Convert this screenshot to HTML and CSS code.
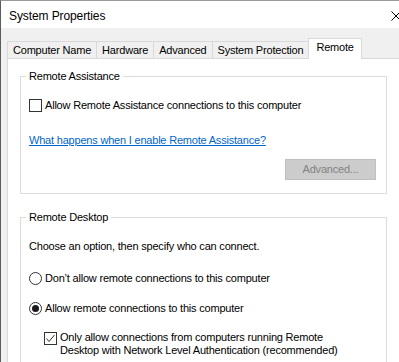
FILE: index.html
```html
<!DOCTYPE html>
<html lang="en">
<head>
    <meta charset="UTF-8">
    <meta name="viewport" content="width=device-width, initial-scale=1.0">
    <title>System Properties</title>
    <link rel="stylesheet" href="styles.css">
</head>
<body>
    <div class="window">
        <div class="titlebar">
            <span class="title">System Properties</span>
            <!-- close button is cut off by the window edge -->
            <span class="close">
                <svg width="8" height="10" viewBox="0 0 8 10">
                    <path d="M0.5 0.5 L9.5 9.5 M9.5 0.5 L0.5 9.5" stroke="#000" stroke-width="1" fill="none"/>
                </svg>
            </span>
        </div>

        <div class="dialog">
            <div class="tabs">
                <div class="tab">Computer Name</div>
                <div class="tab">Hardware</div>
                <div class="tab">Advanced</div>
                <div class="tab">System Protection</div>
                <div class="tab active">Remote</div>
            </div>

            <div class="panel">
                <!-- Remote Assistance -->
                <fieldset class="group">
                    <legend>Remote Assistance</legend>
                    <label class="option">
                        <span class="check"></span>
                        <span>Allow Remote Assistance connections to this computer</span>
                    </label>
                    <a class="help-link" href="#">What happens when I enable Remote Assistance?</a>
                    <div class="button-row">
                        <button class="btn" disabled>Advanced...</button>
                    </div>
                </fieldset>

                <!-- Remote Desktop -->
                <fieldset class="group desktop">
                    <legend>Remote Desktop</legend>
                    <p class="hint">Choose an option, then specify who can connect.</p>
                    <label class="option radio-row">
                        <span class="radio"></span>
                        <span>Don’t allow remote connections to this computer</span>
                    </label>
                    <label class="option radio-row second">
                        <span class="radio checked"></span>
                        <span>Allow remote connections to this computer</span>
                    </label>
                    <label class="option sub">
                        <span class="check checked">
                            <svg width="11" height="11" viewBox="0 0 11 11">
                                <polyline points="1.5,5.5 4,8.5 9.5,2" stroke="#333" stroke-width="1" fill="none"/>
                            </svg>
                        </span>
                        <span>Only allow connections from computers running Remote<br>Desktop with Network Level Authentication (recommended)</span>
                    </label>
                </fieldset>
            </div>
        </div>
    </div>
</body>
</html>
```

FILE: styles.css
```css
html, body {
    margin: 0;
    padding: 0;
}
body {
    background-color: #f0f0f0;
    font-family: "Liberation Sans", Arial, sans-serif;
    font-size: 11px;
    letter-spacing: -0.2px;
    line-height: 13px;
    color: #000;
    overflow: hidden;
}
.window {
    width: 399px;
    height: 362px;
    box-sizing: border-box;
    border-left: 1px solid #5c5c5c;
    border-top: 1px solid #9a9a9a;
    overflow: hidden;
}

/* Title bar */
.titlebar {
    height: 27px;
    box-sizing: border-box;
    padding-top: 3px;
    padding-left: 8px;
    background: white;
    display: flex;
    align-items: center;
    justify-content: space-between;
}
.title {
    font-size: 12px;
    letter-spacing: -0.1px;
}
.close svg {
    display: block;
}

/* Tabs */
.dialog {
    padding: 10px 0 0 6px;
}
.tabs {
    display: flex;
    align-items: flex-end;
}
.tab {
    height: 16px;
    line-height: 16px;
    padding: 0 5px;
    border: 1px solid #d9d9d9;
    border-bottom: none;
    margin-right: -1px;
    background-color: #f0f0f0;
    white-space: nowrap;
}
.tab.active {
    height: 20px;
    line-height: 17px;
    padding: 0 7px;
    margin-bottom: -1px;
    background-color: white;
    position: relative;
    z-index: 1;
}
.panel {
    width: 392px;
    height: 320px;
    box-sizing: border-box;
    padding: 0 12px;
    background: white;
    border: 1px solid #d9d9d9;
    border-right: none;
}

/* Group boxes */
.group {
    margin: 11px 0 0;
    padding: 16px 8px 13px 8px;
    border: 1px solid #dcdcdc;
    min-width: 0;
    display: flex;
    flex-direction: column;
}
.group.desktop {
    margin-top: 17px;
    padding-bottom: 20px;
}
.group legend {
    padding: 0 3px;
    margin-left: -3px;
    line-height: 13px;
}
.option {
    display: flex;
    align-items: flex-start;
    gap: 3px;
}
.check {
    width: 13px;
    height: 13px;
    box-sizing: border-box;
    border: 1px solid #333;
    background: white;
    flex-shrink: 0;
}
.check svg {
    display: block;
}
.radio {
    width: 13px;
    height: 13px;
    box-sizing: border-box;
    border: 1px solid #333;
    border-radius: 50%;
    background: white;
    flex-shrink: 0;
    display: flex;
    align-items: center;
    justify-content: center;
}
.radio.checked:after {
    content: "";
    width: 7px;
    height: 7px;
    border-radius: 50%;
    background-color: #1a1a1a;
}
.help-link {
    display: block;
    width: fit-content;
    margin-top: 22px;
    color: #0066cc;
    text-decoration: underline;
}
.button-row {
    display: flex;
    justify-content: flex-end;
    margin-top: 12px;
}
.btn {
    width: 91px;
    height: 21px;
    margin-right: 2px;
    padding: 0;
    font: inherit;
    letter-spacing: inherit;
    color: #838383;
    background-color: #cccccc;
    border: 1px solid #bfbfbf;
}
.hint {
    margin: 0;
}
.radio-row {
    margin-top: 19px;
}
.radio-row.second {
    margin-top: 17px;
}
.sub {
    margin-top: 16px;
    padding-left: 15px;
}
.sub .check {
    margin-top: 1px;
}
```
